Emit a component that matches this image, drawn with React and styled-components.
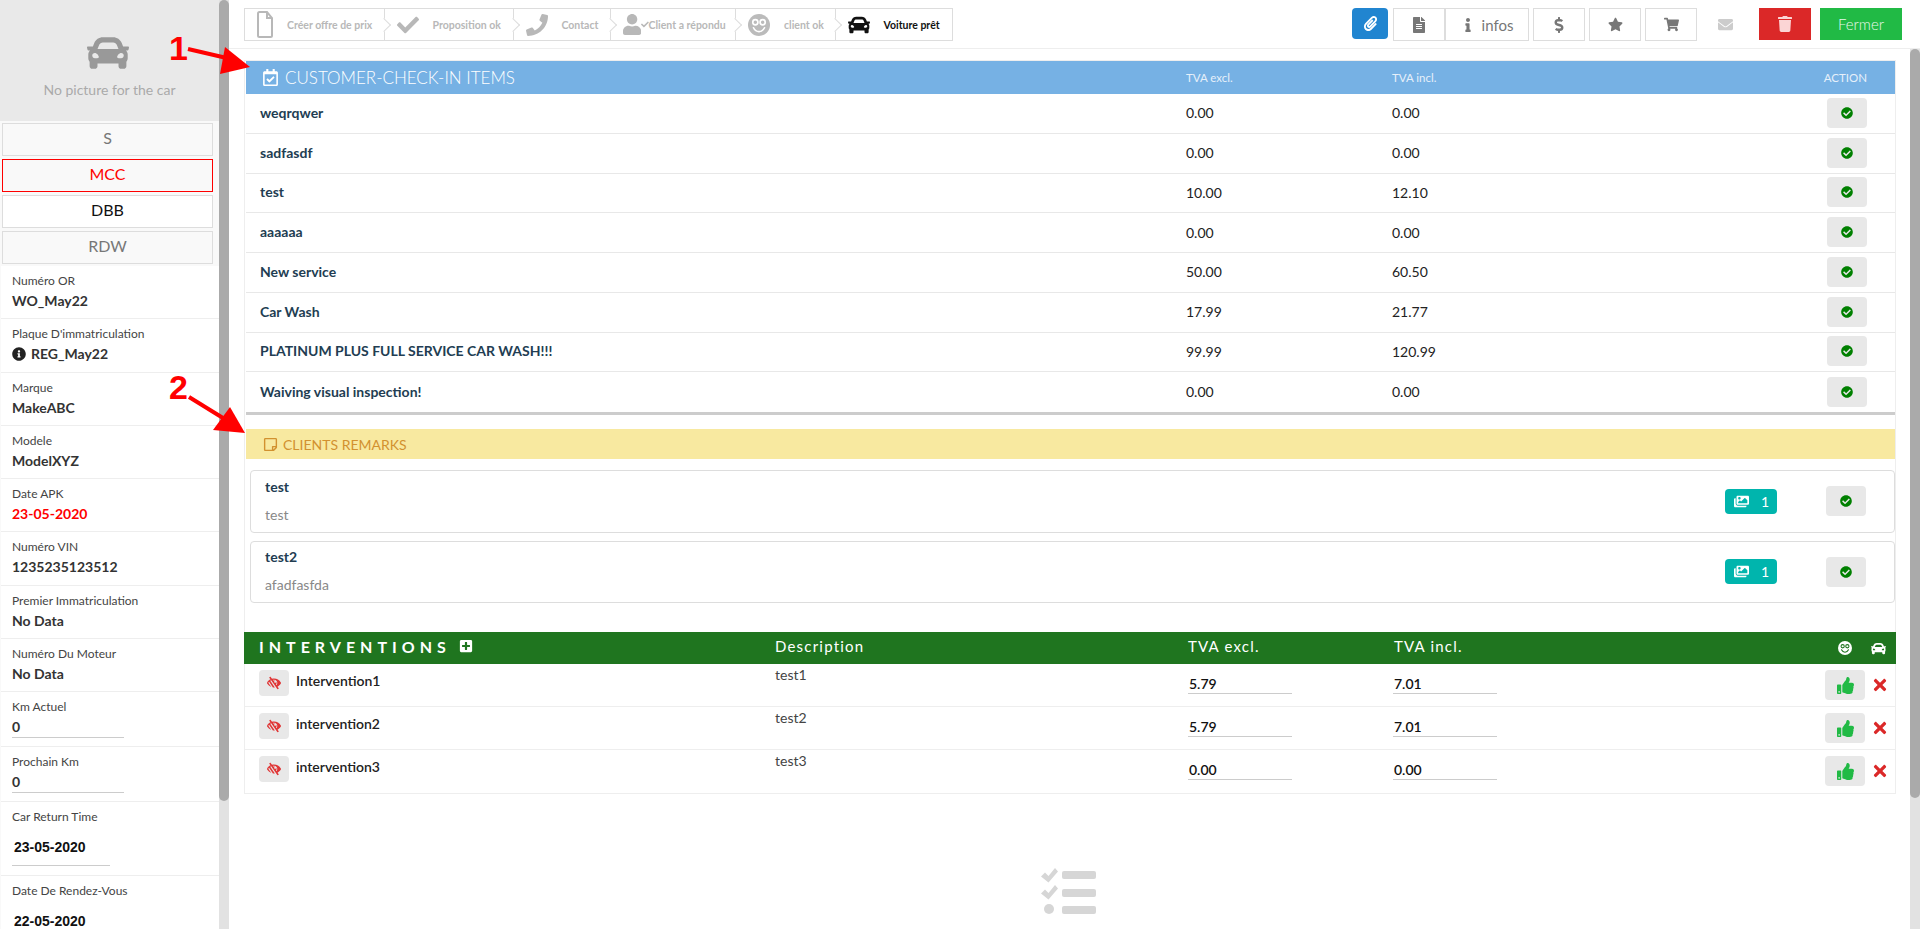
import React from "react";
import styled, { createGlobalStyle } from "styled-components";
import {
    FaCar,
    FaCheck,
    FaCheckCircle,
    FaDollarSign,
    FaEnvelope,
    FaFileAlt,
    FaImages,
    FaInfo,
    FaInfoCircle,
    FaLowVision,
    FaPaperclip,
    FaPhone,
    FaPlusSquare,
    FaRegCalendarCheck,
    FaRegStickyNote,
    FaShoppingCart,
    FaStar,
    FaThumbsUp,
    FaTimes,
    FaTrash,
    FaUser,
} from "react-icons/fa";

const checkItems = [
    ["weqrqwer", "0.00", "0.00"],
    ["sadfasdf", "0.00", "0.00"],
    ["test", "10.00", "12.10"],
    ["aaaaaa", "0.00", "0.00"],
    ["New service", "50.00", "60.50"],
    ["Car Wash", "17.99", "21.77"],
    ["PLATINUM PLUS FULL SERVICE CAR WASH!!!", "99.99", "120.99"],
    ["Waiving visual inspection!", "0.00", "0.00"],
];

const remarks = [
    ["test", "test"],
    ["test2", "afadfasfda"],
];

const interventions = [
    ["Intervention1", "test1", "5.79", "7.01"],
    ["intervention2", "test2", "5.79", "7.01"],
    ["intervention3", "test3", "0.00", "0.00"],
];

const infoFields = [
    ["Marque", "MakeABC"],
    ["Modele", "ModelXYZ"],
];

const lowerFields = [
    ["Numéro VIN", "1235235123512"],
    ["Premier Immatriculation", "No Data"],
    ["Numéro Du Moteur", "No Data"],
];

const GlobalStyle = createGlobalStyle`
    html, body {
        margin: 0;
        height: 100%;
        overflow: hidden;
        background: #fff;
        font-family: "Lato", "Liberation Sans", sans-serif;
        font-size: 14px;
        color: #222;
    }
    * {
        box-sizing: border-box;
    }
`;

// smiley of the old icon font, not in the icon package
function FaceIcon({ size, fill, cut }) {
    return (
        <svg width={size} height={size} viewBox="0 0 24 24">
            <circle cx="12" cy="12" r="12" fill={fill} />
            <circle cx="8" cy="9" r="2.8" fill="none" stroke={cut} strokeWidth="1.8" />
            <circle cx="16" cy="9" r="2.8" fill="none" stroke={cut} strokeWidth="1.8" />
            <path
                d="M6 15c1.500 3 3.600 4.200 6 4.200s4.500-1.200 6-4.200"
                fill="none"
                stroke={cut}
                strokeWidth="1.8"
                strokeLinecap="round"
            />
        </svg>
    );
}

// the reference's file glyph is taller than the package one
function FileIcon() {
    return (
        <svg width="16" height="27" viewBox="0 0 16 27" fill="none" stroke="currentColor" strokeWidth="2">
            <path d="M1 2.500a1.500 1.500 0 0 1 1.500-1.500H10l5 6v17.500a1.500 1.500 0 0 1-1.500 1.500h-11A1.500 1.500 0 0 1 1 24.500z" />
            <path d="M10 1v6h5" />
        </svg>
    );
}

function TasksIcon() {
    return (
        <svg width="55" height="47" viewBox="0 0 55 47" fill="#d6d6d6">
            <path d="M0 8.500L4 4.500L7.500 8L14 0L17 3.500L7.500 14.500Z" />
            <path d="M0 25.500L4 21.500L7.500 25L14 17L17 20.500L7.500 31.500Z" />
            <circle cx="8" cy="41" r="5" />
            <rect x="21" y="3" width="34" height="8" rx="2" />
            <rect x="21" y="21" width="34" height="8" rx="2" />
            <rect x="21" y="38" width="34" height="8" rx="2" />
        </svg>
    );
}

export default function App() {
    return (
        <Page>
            <GlobalStyle />
            <Sidebar>
                <SidebarBody>
                    <PictureBox>
                        <NoPictureCar size={42} />
                        <PictureText>No picture for the car</PictureText>
                    </PictureBox>
                    <SourceList>
                        <SourceButton>S</SourceButton>
                        <SourceButton $variant="active">MCC</SourceButton>
                        <SourceButton $variant="plain">DBB</SourceButton>
                        <SourceButton>RDW</SourceButton>
                    </SourceList>
                    <Field>
                        <FieldLabel>Numéro OR</FieldLabel>
                        <FieldValue>WO_May22</FieldValue>
                    </Field>
                    <Field>
                        <FieldLabel>Plaque D'immatriculation</FieldLabel>
                        <FieldValue>
                            <FaInfoCircle size={14} color="#222" />
                            REG_May22
                        </FieldValue>
                    </Field>
                    {infoFields.map(([label, value]) => (
                        <Field key={label}>
                            <FieldLabel>{label}</FieldLabel>
                            <FieldValue>{value}</FieldValue>
                        </Field>
                    ))}
                    <Field>
                        <FieldLabel>Date APK</FieldLabel>
                        <FieldValue $alert>23-05-2020</FieldValue>
                    </Field>
                    {lowerFields.map(([label, value]) => (
                        <Field key={label}>
                            <FieldLabel>{label}</FieldLabel>
                            <FieldValue>{value}</FieldValue>
                        </Field>
                    ))}
                    <Field>
                        <FieldLabel>Km Actuel</FieldLabel>
                        <KmValue>0</KmValue>
                    </Field>
                    <Field>
                        <FieldLabel>Prochain Km</FieldLabel>
                        <KmValue>0</KmValue>
                    </Field>
                    <Field>
                        <FieldLabel>Car Return Time</FieldLabel>
                        <DateValue>23-05-2020</DateValue>
                    </Field>
                    <Field>
                        <FieldLabel>Date De Rendez-Vous</FieldLabel>
                        <DateValue>22-05-2020</DateValue>
                    </Field>
                </SidebarBody>
                <ScrollTrack>
                    <ScrollThumb $height={801} />
                </ScrollTrack>
            </Sidebar>

            <Main>
                <Toolbar>
                    <Stepper>
                        <Step $width={139.5}>
                            <StepIcon $width={16}>
                                <FileIcon />
                            </StepIcon>
                            <StepLabel>Créer offre de prix</StepLabel>
                        </Step>
                        <Step $width={129}>
                            <StepIcon>
                                <FaCheck size={22} />
                            </StepIcon>
                            <StepLabel>Proposition ok</StepLabel>
                        </Step>
                        <Step $width={97}>
                            <StepIcon>
                                <FaPhone size={22} />
                            </StepIcon>
                            <StepLabel>Contact</StepLabel>
                        </Step>
                        <Step $width={125.5} $tight>
                            <StepIcon $width={26}>
                                <FaUser size={21} />
                                <FaCheck size={9} />
                            </StepIcon>
                            <StepLabel>Client a répondu</StepLabel>
                        </Step>
                        <Step $width={99.5}>
                            <StepIcon>
                                <FaceIcon size={22} fill="#bbb" cut="#fff" />
                            </StepIcon>
                            <StepLabel>client ok</StepLabel>
                        </Step>
                        <Step $width={116} $current>
                            <StepIcon>
                                <FaCar size={22} />
                            </StepIcon>
                            <StepLabel>Voiture prêt</StepLabel>
                        </Step>
                    </Stepper>
                    <Actions>
                        <ToolButton $width={36} $tone="blue">
                            <FaPaperclip size={15} />
                        </ToolButton>
                        <ToolButton $width={52} $flush>
                            <FaFileAlt size={16} />
                        </ToolButton>
                        <ToolButton $width={84} $text>
                            <FaInfo size={14} />
                            infos
                        </ToolButton>
                        <ToolButton $width={52}>
                            <FaDollarSign size={16} />
                        </ToolButton>
                        <ToolButton $width={52}>
                            <FaStar size={15} />
                        </ToolButton>
                        <ToolButton $width={52}>
                            <FaShoppingCart size={15} />
                        </ToolButton>
                        <MailSlot>
                            <FaEnvelope size={15} />
                        </MailSlot>
                        <ToolButton $width={52} $tone="red">
                            <FaTrash size={16} />
                        </ToolButton>
                        <ToolButton $width={82} $tone="green" $text>
                            Fermer
                        </ToolButton>
                    </Actions>
                </Toolbar>

                <ContentRow>
                    <Content>
                        <Panel>
                            <BlueHeader>
                                <BlueTitle>
                                    <FaRegCalendarCheck size={17} />
                                    CUSTOMER-CHECK-IN ITEMS
                                </BlueTitle>
                                <BlueLabel>TVA excl.</BlueLabel>
                                <BlueLabel>TVA incl.</BlueLabel>
                                <BlueAction>ACTION</BlueAction>
                            </BlueHeader>
                            <CheckTable>
                                {checkItems.map(([name, excl, incl]) => (
                                    <CheckRow key={name}>
                                        <ItemName>{name}</ItemName>
                                        <ItemPrice>{excl}</ItemPrice>
                                        <ItemPrice>{incl}</ItemPrice>
                                        <CheckButton>
                                            <FaCheckCircle size={12} />
                                        </CheckButton>
                                    </CheckRow>
                                ))}
                            </CheckTable>

                            <YellowHeader>
                                <FaRegStickyNote size={15} />
                                CLIENTS REMARKS
                            </YellowHeader>
                            <RemarkList>
                                {remarks.map(([title, text]) => (
                                    <RemarkCard key={title}>
                                        <RemarkText>
                                            <ItemName>{title}</ItemName>
                                            <RemarkBody>{text}</RemarkBody>
                                        </RemarkText>
                                        <PhotoBadge>
                                            <FaImages size={15} />1
                                        </PhotoBadge>
                                        <CheckButton>
                                            <FaCheckCircle size={12} />
                                        </CheckButton>
                                    </RemarkCard>
                                ))}
                            </RemarkList>

                            <GreenHeader>
                                <GreenTitle>
                                    INTERVENTIONS
                                    <FaPlusSquare size={14} />
                                </GreenTitle>
                                <GreenLabel>Description</GreenLabel>
                                <GreenLabel>TVA excl.</GreenLabel>
                                <GreenLabel>TVA incl.</GreenLabel>
                                <GreenIcons>
                                    <FaceIcon size={14} fill="#fff" cut="#1f751f" />
                                    <FaCar size={15} />
                                </GreenIcons>
                            </GreenHeader>
                            {interventions.map(([name, desc, excl, incl]) => (
                                <InterventionRow key={name}>
                                    <NameCell>
                                        <HideButton>
                                            <FaLowVision size={14} />
                                        </HideButton>
                                        <InterventionName>{name}</InterventionName>
                                    </NameCell>
                                    <DescCell>{desc}</DescCell>
                                    <PriceInput>{excl}</PriceInput>
                                    <PriceInput>{incl}</PriceInput>
                                    <RowActions>
                                        <ThumbButton>
                                            <FaThumbsUp size={17} />
                                        </ThumbButton>
                                        <FaTimes size={18} color="#db2828" />
                                    </RowActions>
                                </InterventionRow>
                            ))}
                        </Panel>
                        <EmptyState>
                            <TasksIcon />
                        </EmptyState>
                    </Content>
                    <ScrollTrack>
                        <ScrollThumb $height={749} />
                    </ScrollTrack>
                </ContentRow>
            </Main>

            <Marker $left={169} $top={28}>
                1
            </Marker>
            <ArrowMark $left={185} $top={44} width="68" height="34" viewBox="0 0 68 34">
                <path d="M3 5L46 15" stroke="#f00" strokeWidth="4" />
                <path d="M65 23L40 3L35 30Z" fill="#f00" />
            </ArrowMark>
            <Marker $left={169} $top={367}>
                2
            </Marker>
            <ArrowMark $left={187} $top={394} width="60" height="42" viewBox="0 0 60 42">
                <path d="M2 3L36 24" stroke="#f00" strokeWidth="4" />
                <path d="M58 39L43 13L26 36Z" fill="#f00" />
            </ArrowMark>
        </Page>
    );
}

const Page = styled.div`
    position: relative;
    display: flex;
    width: 100%;
    height: 100vh;
    overflow: hidden;
`;

const Sidebar = styled.aside`
    display: flex;
    flex: 0 0 229px;
    height: 100%;
`;

const SidebarBody = styled.div`
    flex: 1;
    min-width: 0;
    overflow: hidden;
    background: #f9f9f9;
`;

const ScrollTrack = styled.div`
    flex: 0 0 10px;
    background: #e2e2e2;
`;

const ScrollThumb = styled.div`
    height: ${(p) => p.$height}px;
    background: #aaa;
    border-radius: 5px;
`;

const PictureBox = styled.div`
    display: flex;
    flex-direction: column;
    align-items: center;
    height: 121px;
    padding-top: 32px;
    background: #e9e9e9;
`;

const NoPictureCar = styled(FaCar)`
    margin-right: 4px;
    color: #999;
`;

const PictureText = styled.div`
    margin-top: 6px;
    font-size: 14px;
    line-height: 20px;
    color: #aaa;
`;

const SourceList = styled.div`
    display: flex;
    flex-direction: column;
    gap: 3px;
    height: 145px;
    padding: 2px 6px 2px 2px;
`;

const SourceButton = styled.div`
    display: flex;
    align-items: center;
    justify-content: center;
    height: 33px;
    padding-bottom: 4px;
    font-size: 16px;
    border: 1px solid ${(p) => (p.$variant === "active" ? "#f00" : "#ddd")};
    background: ${(p) => (p.$variant === "plain" ? "#fff" : "#f9f9f9")};
    color: ${(p) =>
        p.$variant === "active" ? "#f00" : p.$variant === "plain" ? "#111" : "#777"};
`;

const Field = styled.div`
    padding: 7px 11px 7.25px;
    margin-left: 1px;
    background: #fff;
    border-bottom: 1px solid #eee;
`;

const FieldLabel = styled.div`
    font-size: 12px;
    line-height: 16px;
    color: #444;
`;

const FieldValue = styled.div`
    display: flex;
    align-items: center;
    gap: 5px;
    margin-top: 2px;
    font-size: 14px;
    font-weight: 700;
    line-height: 20px;
    color: ${(p) => (p.$alert ? "#f00" : "#333")};
`;

const KmValue = styled.div`
    width: 112px;
    margin-top: 2px;
    margin-bottom: 0.5px;
    font-size: 14px;
    font-weight: 700;
    line-height: 20px;
    color: #333;
    border-bottom: 1px solid #ccc;
`;

const DateValue = styled.div`
    width: 98px;
    height: 41px;
    margin-bottom: 2px;
    padding: 12px 0 0 2px;
    font-family: "Liberation Sans", sans-serif;
    font-size: 14px;
    font-weight: 700;
    line-height: 20px;
    color: #111;
    border-bottom: 1px solid #ccc;
`;

const Main = styled.main`
    display: flex;
    flex: 1;
    flex-direction: column;
    min-width: 0;
`;

const Toolbar = styled.header`
    display: flex;
    justify-content: space-between;
    flex: 0 0 49px;
    padding: 8px 18px 0 15px;
    border-bottom: 1px solid #eee;
`;

const Stepper = styled.div`
    display: flex;
    height: 33px;
    border: 1px solid #ddd;
`;

const Step = styled.div`
    position: relative;
    display: flex;
    align-items: center;
    gap: ${(p) => (p.$tight ? "0" : "14px")};
    width: ${(p) => p.$width}px;
    padding-left: 12px;
    font-size: 10.5px;
    color: ${(p) => (p.$current ? "#111" : "#b8b8b8")};
    border-right: ${(p) => (p.$current ? "0" : "1px solid #ddd")};

    &::after {
        content: ${(p) => (p.$current ? "none" : '""')};
        position: absolute;
        top: 50%;
        right: -5px;
        width: 9px;
        height: 9px;
        background: #fff;
        border-top: 1px solid #ddd;
        border-right: 1px solid #ddd;
        transform: translateY(-50%) rotate(45deg);
    }
`;

const StepIcon = styled.span`
    display: flex;
    flex: none;
    align-items: center;
    justify-content: center;
    width: ${(p) => p.$width || 22}px;
`;

const StepLabel = styled.span`
    font-weight: 700;
    white-space: nowrap;
`;

const Actions = styled.div`
    display: flex;
    align-items: flex-start;
    gap: 4px;
`;

const toneColors = {
    blue: "#2185d0",
    red: "#db2828",
    green: "#21ba45",
};

const ToolButton = styled.div`
    display: flex;
    align-items: center;
    justify-content: center;
    gap: 7px;
    width: ${(p) => p.$width}px;
    height: ${(p) => (p.$tone ? (p.$tone === "blue" ? "31px" : "32px") : "33px")};
    margin-right: ${(p) => (p.$flush ? "-4px" : "0")};
    font-size: ${(p) => (p.$text ? "15px" : "14px")};
    font-weight: ${(p) => (p.$tone ? 300 : 400)};
    color: ${(p) => (p.$tone ? (p.$tone === "blue" ? "#fff" : "#e9f7ec") : "#777")};
    background: ${(p) => toneColors[p.$tone] || "#fff"};
    border: ${(p) => (p.$tone ? "0" : "1px solid #ddd")};
    border-radius: ${(p) => (p.$tone === "blue" ? "4px" : "0")};

    ${(p) => p.$tone === "blue" && "margin-right: 1px;"}
    ${(p) => p.$tone === "red" && "color: #fbd5d5; margin-left: 22px;"}
    ${(p) => p.$tone === "green" && "margin-left: 5px;"}
`;

const MailSlot = styled.div`
    display: flex;
    align-items: center;
    height: 32px;
    margin-left: 17px;
    color: #ccc;
`;

const ContentRow = styled.div`
    display: flex;
    flex: 1;
    min-height: 0;
`;

const Content = styled.div`
    flex: 1;
    min-width: 0;
    padding: 11px 14px 0 15px;
    overflow: hidden;
`;

const Panel = styled.section`
    border: 1px solid #eee;
`;

const BlueHeader = styled.div`
    display: grid;
    grid-template-columns: 940px 206px 1fr auto;
    align-items: center;
    height: 33px;
    margin-left: 1px;
    padding-right: 28px;
    background: #76b1e4;
    color: #fff;
`;

const BlueTitle = styled.div`
    display: flex;
    align-items: center;
    gap: 6px;
    padding-left: 16px;
    font-size: 17px;
    font-weight: 300;
`;

const BlueLabel = styled.div`
    font-size: 11.5px;
    color: #e6f0fa;
`;

const BlueAction = styled(BlueLabel)`
    text-align: right;
`;

const CheckTable = styled.div`
    margin-left: 1px;
    border-bottom: 3px solid #ccc;
`;

const CheckRow = styled.div`
    display: grid;
    grid-template-columns: 940px 206px 1fr auto;
    align-items: center;
    height: 39.75px;
    padding: 0 28px 1px 0;
    border-bottom: 1px solid #e8e8e8;

    &:last-child {
        border-bottom: 0;
    }
`;

const ItemName = styled.div`
    padding-left: 14px;
    font-size: 14px;
    font-weight: 700;
    line-height: 20px;
    color: #223d52;
`;

const ItemPrice = styled.div`
    font-size: 14px;
    color: #222;
`;

const CheckButton = styled.div`
    display: flex;
    align-items: center;
    justify-content: center;
    width: 40px;
    height: 30px;
    color: #008000;
    background: #e8e8e8;
    border-radius: 4px;
`;

const YellowHeader = styled.div`
    display: flex;
    align-items: center;
    gap: 5px;
    height: 30px;
    margin: 14px 0 0 1px;
    padding-left: 17px;
    font-size: 14px;
    color: #d2912f;
    background: #f8e9a0;
`;

const RemarkList = styled.div`
    display: flex;
    flex-direction: column;
    gap: 8px;
    margin: 11px 0 0 5px;
`;

const RemarkCard = styled.div`
    display: flex;
    align-items: center;
    height: 62.5px;
    padding-right: 28px;
    border: 1px solid #ddd;
    border-radius: 4px;
`;

const RemarkText = styled.div`
    flex: 1;
    margin-top: -1px;
`;

const RemarkBody = styled.div`
    margin-top: 8px;
    padding-left: 14px;
    font-size: 14px;
    line-height: 20px;
    color: #888;
`;

const PhotoBadge = styled.div`
    display: flex;
    align-items: center;
    gap: 12px;
    width: 52px;
    height: 25px;
    margin-right: 49px;
    padding-left: 9px;
    font-size: 14px;
    color: #fff;
    background: #00b5ad;
    border-radius: 4px;
`;

const GreenHeader = styled.div`
    display: grid;
    grid-template-columns: 531px 413px 206px 1fr auto;
    align-items: center;
    height: 32px;
    margin: 29px -1px 0;
    padding-right: 10px;
    color: #fff;
    background: #1f751f;
`;

const GreenTitle = styled.div`
    display: flex;
    align-items: center;
    gap: 8px;
    margin-top: -4px;
    padding-left: 15px;
    font-size: 16px;
    font-weight: 700;
    letter-spacing: 5px;
`;

const GreenLabel = styled.div`
    margin-top: -5px;
    font-size: 15px;
    letter-spacing: 1.2px;
`;

const GreenIcons = styled.div`
    display: flex;
    align-items: center;
    gap: 19px;
    grid-column: 5;
`;

const InterventionRow = styled.div`
    display: grid;
    grid-template-columns: 530px 413px 205px 1fr auto;
    height: 43px;
    border-bottom: 1px solid #eee;

    &:last-child {
        border-bottom: 0;
    }
`;

const NameCell = styled.div`
    display: flex;
    align-items: flex-start;
    gap: 7px;
    padding: 6px 0 0 14px;
`;

const HideButton = styled.div`
    display: flex;
    align-items: center;
    justify-content: center;
    width: 30px;
    height: 26px;
    color: #e03636;
    background: #e8e8e8;
    border-radius: 4px;
`;

const InterventionName = styled.div`
    margin-top: 1px;
    font-size: 14px;
    font-weight: 600;
    line-height: 20px;
    color: #222;
`;

const DescCell = styled.div`
    margin-top: 1px;
    font-size: 14px;
    line-height: 20px;
    color: #444;
`;

const PriceInput = styled.div`
    width: 104px;
    height: 20px;
    margin-top: 10px;
    padding-left: 1px;
    font-size: 14px;
    font-weight: 600;
    line-height: 20px;
    color: #111;
    border-bottom: 1px solid #ccc;
`;

const RowActions = styled.div`
    display: flex;
    align-items: center;
    align-self: start;
    gap: 6px;
    margin-top: 6px;
    padding-right: 6px;
`;

const ThumbButton = styled.div`
    display: flex;
    align-items: center;
    justify-content: center;
    width: 40px;
    height: 30px;
    color: #21ba45;
    background: #e8e8e8;
    border-radius: 4px;
`;

const EmptyState = styled.div`
    display: flex;
    justify-content: center;
    margin-top: 74px;
    padding-right: 3px;
`;

const Marker = styled.div`
    position: absolute;
    left: ${(p) => p.$left}px;
    top: ${(p) => p.$top}px;
    font-family: "Liberation Sans", sans-serif;
    font-size: 34px;
    font-weight: 700;
    line-height: 40px;
    color: #f00;
`;

const ArrowMark = styled.svg`
    position: absolute;
    left: ${(p) => p.$left}px;
    top: ${(p) => p.$top}px;
`;
